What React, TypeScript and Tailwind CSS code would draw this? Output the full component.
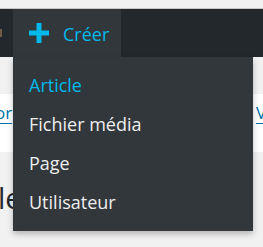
import React from 'react'

const items = [
    { label: 'Article', active: true },
    { label: 'Fichier média', active: false },
    { label: 'Page', active: false },
    { label: 'Utilisateur', active: false },
]

function PlusIcon() {
    return (
        <svg width="20" height="20" viewBox="0 0 20 20" className="shrink-0">
            <rect x="0" y="7.5" width="20" height="5" fill="#00b9eb" />
            <rect x="7.5" y="0" width="5" height="20" fill="#00b9eb" />
        </svg>
    )
}

export default function App() {
    return (
        <div className="relative w-[263px] h-[247px] overflow-hidden bg-[#f1f1f1] font-['Open_Sans',sans-serif]">
            <div className="h-2 bg-[#f1f1f1]" />
            <div className="h-px bg-[#c8c8c8]" />

            {/* admin bar */}
            <div className="flex h-[48px] bg-[#23282d]">
                <div className="w-[13px] flex items-center">
                    <div className="w-[2px] h-[8px] bg-[#6e5c48]" />
                </div>
                <div className="relative w-[108px] flex items-center bg-[#32373c] pl-4">
                    <PlusIcon />
                    <span className="ml-[14px] mt-[2px] text-[18px] text-[#00b9eb]">Créer</span>

                    <ul className="absolute left-0 top-full z-10 w-[240px] py-[9px] bg-[#32373c] shadow-[0_3px_6px_rgba(0,0,0,0.25)]">
                        {items.map((item) => (
                            <li
                                key={item.label}
                                className={`flex items-center h-[39px] pl-4 text-[18px] ${item.active ? 'text-[#00b9eb]' : 'text-[#eeeeee]'}`}
                            >
                                {item.label}
                            </li>
                        ))}
                    </ul>
                </div>
            </div>

            <div className="h-[37px]" />

            {/* page content behind the menu */}
            <div className="h-[58px] bg-white flex justify-between pt-[7px]">
                <a className="ml-[-5px] text-[17px] leading-[24px] text-[#0073aa] underline underline-offset-[4px]">or</a>
                <a className="mr-[-8px] w-[15px] overflow-hidden text-[17px] leading-[24px] text-[#0073aa] underline underline-offset-[4px]">V</a>
            </div>

            <h1 className="ml-[-2px] mt-[26px] text-[29px] leading-[40px] text-[#23282d]">le</h1>
        </div>
    )
}
